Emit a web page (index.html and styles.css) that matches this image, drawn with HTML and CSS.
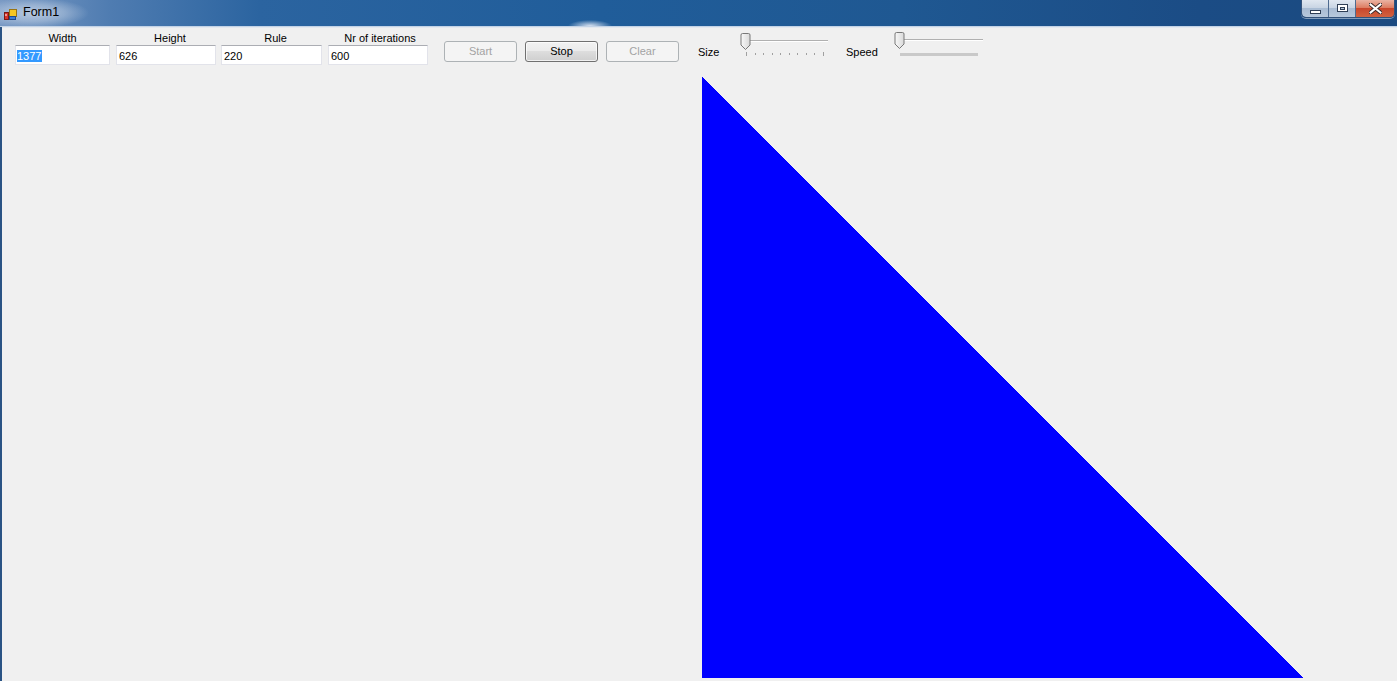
FILE: index.html
```html
<!DOCTYPE html>
<html>
<head>
<meta charset="utf-8">
<title>Form1</title>
<link rel="stylesheet" href="styles.css">
</head>
<body>
<div class="window">
  <div class="titlebar">
    <svg class="app-icon" width="16" height="16" viewBox="0 0 16 16">
      <rect x="2.5" y="8.5" width="4" height="7" fill="#d8322b" stroke="#7a1a14"/>
      <rect x="7.5" y="5.5" width="7" height="7" fill="#f5c623" stroke="#9a7410"/>
      <rect x="7.5" y="12.5" width="6" height="3" fill="#3d7bd6" stroke="#1d4a8c"/>
      <rect x="3.5" y="10" width="1" height="2" fill="#ffffff"/>
    </svg>
    <span class="title">Form1</span>
    <div class="caption-buttons">
      <div class="cbtn cmin"><span class="g-min"></span></div>
      <div class="cbtn cmax"><span class="g-max"></span></div>
      <div class="cbtn cclose">
        <svg width="13" height="11" viewBox="0 0 13 11">
          <path d="M1.5 1.5 L11.5 9.5 M11.5 1.5 L1.5 9.5" stroke="#3a2a2a" stroke-width="4" stroke-linecap="square"/>
          <path d="M1.5 1.5 L11.5 9.5 M11.5 1.5 L1.5 9.5" stroke="#ffffff" stroke-width="2" stroke-linecap="square"/>
        </svg>
      </div>
    </div>
  </div>
  <div class="client">
    <div class="toolbar">
      <div class="field f1">
        <div class="flabel">Width</div>
        <div class="textbox"><span class="sel">1377</span></div>
      </div>
      <div class="field f2">
        <div class="flabel">Height</div>
        <div class="textbox">626</div>
      </div>
      <div class="field f3">
        <div class="flabel">Rule</div>
        <div class="textbox">220</div>
      </div>
      <div class="field f4">
        <div class="flabel">Nr of iterations</div>
        <div class="textbox">600</div>
      </div>
      <div class="btn disabled b-start">Start</div>
      <div class="btn b-stop">Stop</div>
      <div class="btn disabled b-clear">Clear</div>
      <div class="tlabel l-size">Size</div>
      <svg class="slider s-size" width="90" height="26" viewBox="0 0 90 26">
        <line x1="8" y1="8.5" x2="88" y2="8.5" stroke="#b0b0b0"/>
        <line x1="8" y1="9.5" x2="88" y2="9.5" stroke="#ffffff"/>
        <g stroke="#a0a0a0">
          <line x1="6.5" y1="20" x2="6.5" y2="24"/>
          <line x1="15.5" y1="21" x2="15.5" y2="23"/>
          <line x1="23.5" y1="21" x2="23.5" y2="23"/>
          <line x1="32.5" y1="21" x2="32.5" y2="23"/>
          <line x1="40.5" y1="21" x2="40.5" y2="23"/>
          <line x1="49.5" y1="21" x2="49.5" y2="23"/>
          <line x1="57.5" y1="21" x2="57.5" y2="23"/>
          <line x1="66.5" y1="21" x2="66.5" y2="23"/>
          <line x1="74.5" y1="21" x2="74.5" y2="23"/>
          <line x1="83.5" y1="20" x2="83.5" y2="24"/>
        </g>
        <defs>
          <linearGradient id="thumb" x1="0" y1="0" x2="1" y2="0">
            <stop offset="0" stop-color="#f8f8f8"/>
            <stop offset="1" stop-color="#d9d9d9"/>
          </linearGradient>
        </defs>
        <path d="M2.5 1.5 h6 a1.5 1.5 0 0 1 1.5 1.5 v10 l-4.5 4.5 l-4.5 -4.5 v-10 a1.5 1.5 0 0 1 1.5 -1.5 z" fill="url(#thumb)" stroke="#787878"/>
      </svg>
      <div class="tlabel l-speed">Speed</div>
      <svg class="slider s-speed" width="90" height="26" viewBox="0 0 90 26">
        <line x1="8" y1="8.5" x2="89" y2="8.5" stroke="#b0b0b0"/>
        <line x1="8" y1="9.5" x2="89" y2="9.5" stroke="#ffffff"/>
        <rect x="6" y="22" width="78" height="3" fill="#c9c9c9"/>
        <path d="M2.5 1.5 h6 a1.5 1.5 0 0 1 1.5 1.5 v10 l-4.5 4.5 l-4.5 -4.5 v-10 a1.5 1.5 0 0 1 1.5 -1.5 z" fill="url(#thumb)" stroke="#787878"/>
      </svg>
    </div>
    <div class="canvas">
      <svg class="drawing" width="601" height="601" viewBox="0 0 601 601" shape-rendering="crispEdges">
        <polygon points="0,0 0,601 601,601" fill="#0000ff"/>
      </svg>
    </div>
  </div>
</div>
</body>
</html>
```

FILE: styles.css
```css
* { box-sizing: border-box; }
html, body { margin: 0; padding: 0; }
body {
  width: 1397px;
  height: 681px;
  overflow: hidden;
  background: #f0f0f0;
  font-family: "Liberation Sans", Arial, sans-serif;
  font-size: 11px;
  color: #000;
}
.window {
  height: 681px;
  display: flex;
  flex-direction: column;
  border-left: 2px solid #2a5384;
  background: #f0f0f0;
}
.titlebar {
  height: 27px;
  margin-left: -2px;
  display: flex;
  align-items: flex-start;
  border-bottom: 1px solid #c3d3e6;
  background:
    radial-gradient(ellipse 55px 15px at 34px 13px, rgba(200,214,232,0.8) 0%, rgba(200,214,232,0.45) 55%, rgba(200,214,232,0) 100%),
    radial-gradient(ellipse 22px 6px at 590px 26px, rgba(235,240,250,0.9), rgba(235,240,250,0)),
    linear-gradient(to right, #7a9ac4 0px, #4f7cb1 110px, #2b64a0 260px, #205d9a 600px, #1f5892 900px, #1b4c85 1200px, #1b4a80 1397px);
}
.app-icon { margin: 4px 0 0 2px; flex: none; }
.title {
  margin: 0 0 0 5px;
  padding-top: 5px;
  font-size: 12.5px;
  line-height: 15px;
  color: #000;
}
.caption-buttons {
  margin-left: auto;
  margin-right: 2px;
  display: flex;
  height: 18px;
  border: 1px solid #33527a;
  border-top: none;
  border-radius: 0 0 5px 5px;
  overflow: hidden;
  box-shadow: 0 1px 0 rgba(255,255,255,0.45);
}
.cbtn {
  height: 17px;
  display: flex;
  align-items: center;
  justify-content: center;
}
.cmin, .cmax {
  width: 27px;
  background: linear-gradient(to bottom, #e0e7f0 0%, #c9d5e4 45%, #a9bcd3 50%, #b7c8dc 100%);
  border-right: 1px solid #4f6b90;
}
.cmin { border-radius: 0 0 0 4px; }
.cclose {
  width: 38px;
  background: linear-gradient(to bottom, #eab3a3 0%, #dd7d62 45%, #c9472c 50%, #d3623f 100%);
}
.g-min {
  width: 11px;
  height: 4px;
  margin-top: 6px;
  background: #fff;
  border: 1px solid #2e3e55;
}
.g-max {
  width: 11px;
  height: 8px;
  margin-bottom: 1px;
  background: #fff;
  border: 1px solid #2e3e55;
  position: relative;
}
.g-max::after {
  content: "";
  position: absolute;
  left: 2px; top: 2px; right: 2px; bottom: 1px;
  border: 1px solid #2e3e55;
  background: #b9c8db;
}
.client {
  flex: 1;
  display: flex;
  flex-direction: column;
  border-top: 1px solid #e3e8ef;
}
.toolbar {
  height: 49px;
  display: flex;
  align-items: flex-start;
  padding-left: 13px;
  flex: none;
}
.field {
  display: flex;
  flex-direction: column;
  margin-top: 3px;
}
.f1 { width: 95px; }
.f2 { width: 100px; margin-left: 6px; }
.f3 { width: 101px; margin-left: 5px; }
.f4 { width: 100px; margin-left: 6px; }
.flabel {
  height: 14px;
  line-height: 14px;
  text-align: center;
  white-space: nowrap;
}
.f2 .flabel { padding-left: 8px; }
.f3 .flabel { padding-left: 8px; }
.f4 .flabel { padding-left: 4px; }
.textbox {
  height: 20px;
  background: #fff;
  border: 1px solid #e2e3ea;
  border-top-color: #abadb3;
  padding: 3px 0 0 2px;
  line-height: 14px;
  white-space: nowrap;
}
.sel {
  background: #3399ff;
  color: #fff;
  padding: 0 1px 0 0;
  margin-left: -1px;
}
.btn {
  width: 73px;
  height: 21px;
  margin-top: 13px;
  border: 1px solid #707070;
  border-radius: 3px;
  text-align: center;
  line-height: 19px;
  background: linear-gradient(to bottom, #f2f2f2 0%, #ebebeb 45%, #dddddd 50%, #cfcfcf 100%);
  box-shadow: inset 0 0 0 1px rgba(255,255,255,0.7);
}
.btn.disabled {
  border-color: #adb2b5;
  background: #f4f4f4;
  color: #a3a3a3;
  box-shadow: none;
}
.b-start { margin-left: 16px; }
.b-stop { margin-left: 8px; }
.b-clear { margin-left: 8px; }
.tlabel {
  margin-top: 17px;
  line-height: 14px;
}
.l-size { width: 42px; margin-left: 19px; }
.slider { display: block; flex: none; }
.s-size { margin-top: 4px; }
.l-speed { width: 48px; margin-left: 16px; }
.s-speed { margin-top: 3px; }
.canvas {
  flex: 1;
  padding-left: 700px;
}
.drawing { display: block; }
```
